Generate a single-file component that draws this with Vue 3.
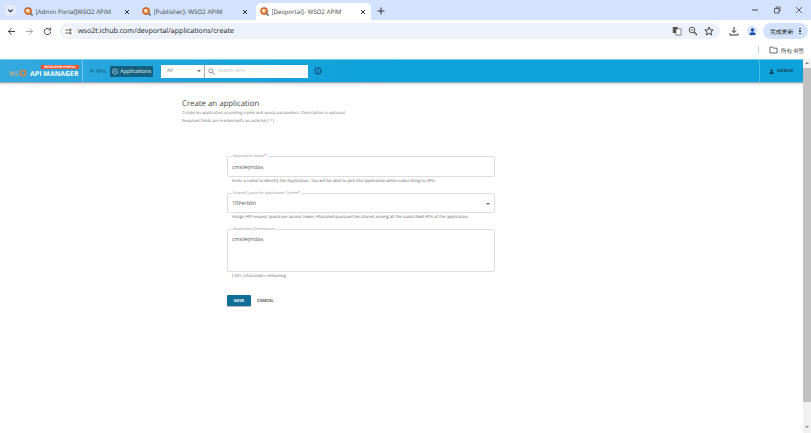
<script setup>
const tabs = [
  { title: '[Admin Portal]WSO2 APIM', active: false },
  { title: '[Publisher]- WSO2 APIM', active: false },
  { title: '[Devportal]- WSO2 APIM', active: true },
]
</script>

<template>
  <div class="window">
    <div class="tabstrip">
      <button class="tabsearch"><svg width="7" height="7" viewBox="0 0 8 8"><path d="M1.5 3 4 5.5 6.500 3" fill="none" stroke="#1f1f1f" stroke-width="1.300"/></svg></button>
      <div v-for="t in tabs" :key="t.title" class="tab" :class="{ active: t.active }">
        <svg class="favicon" width="9" height="9" viewBox="0 0 10 10">
          <circle cx="4.500" cy="4.500" r="3.600" fill="#f3a261" stroke="#c9561d" stroke-width="1.300"/>
          <circle cx="4" cy="4" r="1.400" fill="#fff"/>
          <path d="M7 7 9.500 9.500" stroke="#555" stroke-width="1.400"/>
        </svg>
        <span class="tabtitle">{{ t.title }}</span>
        <svg class="tabx" width="6" height="6" viewBox="0 0 6 6"><path d="M1 1 5 5M5 1 1 5" stroke="#333" stroke-width="1"/></svg>
      </div>
      <svg class="plus" width="8" height="8" viewBox="0 0 8 8"><path d="M4 .5v7M.5 4h7" stroke="#333" stroke-width="1"/></svg>
      <div class="winctl">
        <svg width="8" height="8" viewBox="0 0 8 8"><path d="M1 4h6" stroke="#444"/></svg>
        <svg width="8" height="8" viewBox="0 0 8 8"><path d="M1.500 2.500h4.500v4.500h-4.500zM3 2.500V1h4v4H6" fill="none" stroke="#444" stroke-width=".8"/></svg>
        <svg width="8" height="8" viewBox="0 0 8 8"><path d="M1 1 7 7M7 1 1 7" stroke="#444" stroke-width=".8"/></svg>
      </div>
    </div>

    <div class="toolbar">
      <svg class="navicon" width="9" height="9" viewBox="0 0 10 10"><path d="M9 5H1.500M5 1.500 1.500 5 5 8.500" fill="none" stroke="#3c4043" stroke-width="1.100"/></svg>
      <svg class="navicon" width="9" height="9" viewBox="0 0 10 10"><path d="M1 5h7.500M5 1.500 8.500 5 5 8.500" fill="none" stroke="#a5a8ad" stroke-width="1.100"/></svg>
      <svg class="navicon" width="9" height="9" viewBox="0 0 10 10"><path d="M8.500 5A3.500 3.500 0 1 1 7.400 2.400M8.500 .8v2.500H6" fill="none" stroke="#3c4043" stroke-width="1.100"/></svg>
      <div class="omnibox">
        <span class="siteinfo"><svg width="7" height="7" viewBox="0 0 8 8"><path d="M.5 2.200h3.500M.5 5.800h3.500" stroke="#333" stroke-width=".9"/><circle cx="6" cy="2.200" r="1.200" fill="none" stroke="#333" stroke-width=".8"/><circle cx="6" cy="5.800" r="1.200" fill="none" stroke="#333" stroke-width=".8"/></svg></span>
        <span class="url">wso2t.ichub.com/devportal/applications/create</span>
        <svg class="omni-i" width="10" height="10" viewBox="0 0 10 10"><rect x=".8" y="1" width="5" height="6" fill="#555"/><rect x="4" y="3" width="5" height="6" fill="#fff" stroke="#555" stroke-width=".7"/></svg>
        <svg class="omni-i" width="10" height="10" viewBox="0 0 10 10"><circle cx="4" cy="4" r="2.800" fill="none" stroke="#444" stroke-width=".9"/><path d="M6 6 9 9" stroke="#444" stroke-width="1.100"/><path d="M2.700 4h2.600" stroke="#444" stroke-width=".7"/></svg>
        <svg class="omni-i" width="10" height="10" viewBox="0 0 10 10"><path d="M5 1 6.200 3.800 9.200 4 6.900 6 7.600 9 5 7.400 2.400 9 3.100 6 .8 4 3.800 3.800Z" fill="none" stroke="#333" stroke-width=".9"/></svg>
      </div>
      <svg class="dl" width="10" height="10" viewBox="0 0 10 10"><path d="M5 1v5.500M2.800 4.400 5 6.600 7.200 4.400M1 7.500V9h8V7.500" fill="none" stroke="#333" stroke-width="1"/></svg>
      <span class="avatar"><svg width="7" height="7" viewBox="0 0 8 8"><circle cx="4" cy="2.300" r="1.900" fill="#174ea6"/><path d="M.5 8c0-2.500 1.500-3.200 3.500-3.200S7.500 5.500 7.500 8Z" fill="#174ea6"/></svg></span>
      <button class="update">完成更新<span class="dots"><i></i><i></i><i></i></span></button>
    </div>

    <div class="bookmarks">
      <span class="bm-sep"></span>
      <svg width="9" height="8" viewBox="0 0 10 9"><path d="M1 1.200h3l1 1.200h4v5.400H1Z" fill="none" stroke="#444" stroke-width=".9"/></svg>
      <span class="bm-text">所有书签</span>
    </div>

    <div class="viewport">
      <div class="page">
        <header class="appbar">
          <div class="brand">
            <span class="portal-tag">DEVELOPER PORTAL</span>
            <span class="wso">WS<svg width="8" height="8" viewBox="0 0 10 10"><circle cx="5" cy="5" r="3.300" fill="none" stroke="#f47b20" stroke-width="1.800"/></svg></span>
            <span class="apim">API MANAGER</span>
          </div>
          <nav class="nav">
            <a class="nav-item"><svg width="6" height="6" viewBox="0 0 8 8"><circle cx="4" cy="4" r="2.200" fill="none" stroke="#134f6e" stroke-width="1.300"/><circle cx="4" cy="4" r="3.400" fill="none" stroke="#134f6e" stroke-width=".8" stroke-dasharray="1 1"/></svg>APIs</a>
            <a class="nav-item current"><svg width="7" height="7" viewBox="0 0 8 8"><circle cx="4" cy="4" r="3.300" fill="none" stroke="#d8e6ee" stroke-width=".8"/><path d="M2 5.200c.8-1.700 3.200-1.700 4 0" fill="none" stroke="#d8e6ee" stroke-width=".8"/></svg>Applications</a>
          </nav>
          <div class="search">
            <div class="scope">All<span class="caret small"></span></div>
            <div class="searchbox">
              <svg width="7" height="7" viewBox="0 0 8 8"><circle cx="3.200" cy="3.200" r="2.300" fill="none" stroke="#777" stroke-width=".9"/><path d="M5 5 7.500 7.500" stroke="#777" stroke-width="1"/></svg>
              <span>Search APIs</span>
            </div>
          </div>
          <svg class="info" width="8" height="8" viewBox="0 0 8 8"><circle cx="4" cy="4" r="3.200" fill="none" stroke="#0f3b57" stroke-width=".9"/><path d="M4 3.400V6M4 2v.7" stroke="#0f3b57" stroke-width=".9"/></svg>
          <div class="user">
            <svg width="5" height="5" viewBox="0 0 8 8"><circle cx="4" cy="2.300" r="2" fill="#0d3c56"/><path d="M.5 8c0-2.500 1.500-3.200 3.500-3.200S7.500 5.500 7.500 8Z" fill="#0d3c56"/></svg>
            ADMIN
          </div>
        </header>

        <main class="content">
          <section class="intro">
            <h1>Create an application</h1>
            <p>Create an application providing name and quota parameters. Description is optional.</p>
            <p>Required fields are marked with an asterisk ( * )</p>
          </section>
          <form class="form">
            <div class="field name">
              <label>Application Name<b>*</b></label>
              <div class="value">cmsliejmdas</div>
            </div>
            <p class="help">Enter a name to identify the Application. You will be able to pick this application when subscribing to APIs</p>
            <div class="field quota">
              <label>Shared Quota for Application Tokens<b>*</b></label>
              <div class="value">10PerMin</div>
              <span class="caret"></span>
            </div>
            <p class="help">Assign API request quota per access token. Allocated quota will be shared among all the subscribed APIs of the application.</p>
            <div class="field desc">
              <label>Application Description</label>
              <div class="value">cmsliejmdas</div>
            </div>
            <p class="help">( 501 ) characters remaining</p>
            <div class="actions">
              <button type="button" class="save">SAVE</button>
              <button type="button" class="cancel">CANCEL</button>
            </div>
          </form>
        </main>
      </div>
      <div class="scrollbar">
        <span class="arrow up"></span>
        <div class="thumb"></div>
        <span class="arrow down"></span>
      </div>
    </div>
  </div>
</template>

<style>
html, body { margin: 0; overflow: hidden; background: #fff; }
</style>

<style scoped>
.window { width: 811px; height: 433px; display: flex; flex-direction: column; font-family: "Open Sans", "Noto Sans CJK SC", sans-serif; overflow: hidden; text-rendering: geometricPrecision; }
button { font-family: inherit; border: 0; padding: 0; text-rendering: geometricPrecision; }

.tabstrip { height: 20px; background: #d3e3fd; display: flex; align-items: flex-end; flex: none; }
.tabsearch { width: 11px; height: 11px; border-radius: 4px; background: #e4ecfa; margin: 0 3.500px 4px 5px; display: flex; align-items: center; justify-content: center; flex: none; }
.tab { width: 115px; height: 17px; margin-right: 3px; display: flex; align-items: center; padding: 0 5px 0 4px; box-sizing: border-box; gap: 3px; font-size: 6.200px; color: #444; border-radius: 5px 5px 0 0; flex: none; }
.tabtitle { flex: 1; white-space: nowrap; overflow: hidden; }
.tab.active { background: #fff; }
.favicon { flex: none; }
.tabx { flex: none; }
.plus { margin: 0 0 5px 3px; }
.winctl { margin-left: auto; display: flex; gap: 14px; padding: 0 8px 6px 0; }

.toolbar { height: 21px; background: #fff; display: flex; align-items: center; flex: none; padding: 1px 0 0 7px; box-sizing: border-box; }
.navicon { margin-right: 9px; flex: none; }
.omnibox { width: 660px; height: 16px; background: #edf2fa; border-radius: 8px; display: flex; align-items: center; margin-left: -1px; box-sizing: border-box; padding: 0 6px 0 3px; }
.siteinfo { width: 11px; height: 11px; background: #fff; border-radius: 50%; display: flex; align-items: center; justify-content: center; margin-right: 4px; }
.url { font-size: 7.100px; color: #202124; flex: 1; }
.omni-i { margin-left: 6px; }
.dl { margin-left: 9px; }
.avatar { width: 10px; height: 10px; background: #d3e3fd; border-radius: 50%; display: flex; align-items: center; justify-content: center; margin-left: 8px; }
.update { height: 16px; width: 45px; margin-left: 6px; background: #d3e3fd; border-radius: 8px; font-size: 5.800px; color: #222; display: flex; align-items: center; padding-left: 7px; gap: 6px; box-sizing: border-box; }
.dots { display: flex; flex-direction: column; gap: 1px; }
.dots i { display: block; width: 1.500px; height: 1.500px; background: #333; border-radius: 50%; }

.bookmarks { height: 18px; background: #fff; flex: none; display: flex; align-items: center; justify-content: flex-end; gap: 3px; padding-right: 7px; box-sizing: border-box; }
.bm-sep { width: 1px; height: 8px; background: #c9d7ee; margin-right: 7px; }
.bm-text { font-size: 5.800px; color: #444; }

.viewport { flex: 1; display: flex; min-height: 0; }
.page { flex: 1; min-width: 0; background: #fff; }
.appbar { height: 24px; background: linear-gradient(90deg, #35a9df 0, #1ea4dc 160px, #0ea2da 400px); border-top: 1px solid #7ccbea; border-bottom: 1px solid #9ab; box-sizing: border-box; display: flex; align-items: center; box-shadow: 0 1px 2px rgba(0,0,0,.2); }
.brand { position: relative; width: 83px; height: 22px; display: flex; align-items: center; padding: 4px 0 0 9px; box-sizing: border-box; border-right: 1px solid #7cc4e4; flex: none; gap: 2px; }
.portal-tag { position: absolute; top: 5px; left: 41px; width: 38px; height: 4px; background: #f0542d; color: #fff; font-size: 3.200px; line-height: 4px; font-weight: 700; text-align: center; white-space: nowrap; }
.wso { font-size: 6.500px; color: #f0b070; display: flex; align-items: center; width: 19px; }
.apim { font-size: 6.800px; font-weight: 700; color: #fff; letter-spacing: .1px; white-space: nowrap; }
.nav { display: flex; align-items: center; margin-left: 6px; gap: 3px; }
.nav-item { display: flex; align-items: center; gap: 2px; font-size: 5.200px; color: #0f4f70; height: 11px; padding: 0 1px; width: 18px; box-sizing: border-box; }
.nav-item.current { background: #14627f; color: #e8f1f5; padding: 0 2px; width: 43px; font-size: 5.400px; white-space: nowrap; }
.search { display: flex; margin-left: 8px; height: 13px; }
.scope { width: 44px; background: #fff; font-size: 5px; color: #666; display: flex; align-items: center; justify-content: space-between; padding: 0 3px 0 6px; box-sizing: border-box; border-right: 1px solid #aaa; position: relative; }
.searchbox { width: 103px; background: #fff; display: flex; align-items: center; gap: 3px; padding-left: 3px; font-size: 5px; color: #bbb; box-sizing: border-box; }
.info { margin-left: 6px; }
.user { margin-left: auto; width: 44px; height: 22px; border-left: 1px solid #4cb6e2; display: flex; align-items: center; gap: 3px; padding-left: 9px; font-size: 4.300px; font-weight: 700; color: #0d3c56; letter-spacing: .2px; box-sizing: border-box; }

.caret { border-left: 2px solid transparent; border-right: 2px solid transparent; border-top: 2px solid #666; width: 0; height: 0; }
.content { padding: 16px 0 0 182px; }
.intro h1 { margin: 0; font-size: 7.800px; line-height: 11px; font-weight: 400; color: #444; }
.intro p { margin: 0; font-size: 4.170px; line-height: 7.500px; color: #777; }
.form { width: 268px; margin: 31px 0 0 45px; }
.field { position: relative; border: 1px solid #dcdcdc; border-radius: 2px; box-sizing: border-box; padding-left: 4px; display: flex; align-items: center; }
.field label { position: absolute; top: -3px; left: 4px; background: #fff; padding: 0 1px; font-size: 3.800px; line-height: 5px; color: #999; white-space: nowrap; }
.field label b { color: #e53935; font-weight: 400; }
.value { font-size: 5.400px; color: #555; }
.name { height: 21px; }
.quota { height: 20px; }
.quota .caret { position: absolute; right: 4px; top: 9px; }
.desc { height: 43px; align-items: flex-start; padding-top: 5px; }
.help { margin: 0; padding-left: 5px; height: 16px; box-sizing: border-box; padding-top: 2px; font-size: 4.170px; line-height: 6px; color: #666; white-space: nowrap; }
.actions { display: flex; align-items: center; margin-top: 7px; }
.save { width: 24px; height: 11px; background: #0f6d96; color: #fff; font-size: 4.300px; font-weight: 700; border-radius: 1px; box-shadow: 0 1px 1px rgba(0,0,0,.3); }
.cancel { background: none; margin-left: 6px; font-size: 4.300px; font-weight: 700; color: #555; }

.scrollbar { width: 8px; background: #f1f1f1; display: flex; flex-direction: column; align-items: center; flex: none; padding-top: 3px; box-sizing: border-box; }
.arrow { width: 0; height: 0; border-left: 2px solid transparent; border-right: 2px solid transparent; flex: none; }
.arrow.up { border-bottom: 2px solid #888; }
.arrow.down { border-top: 2px solid #888; margin-top: 24px; }
.thumb { height: 334px; margin-top: 4px; width: 100%; background: #c1c1c1; flex: none; }
</style>
